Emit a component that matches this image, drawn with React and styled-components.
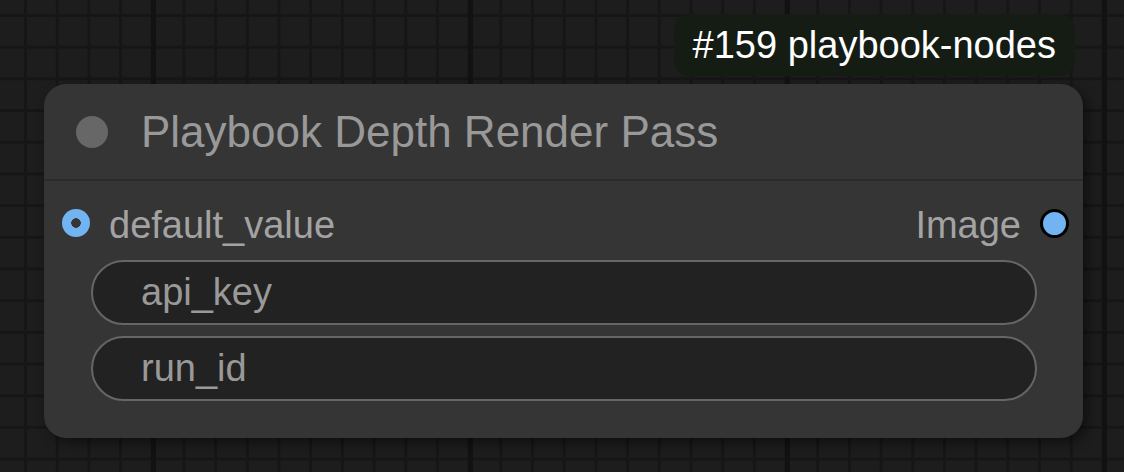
import styled, { createGlobalStyle } from 'styled-components';

const GlobalStyle = createGlobalStyle`
    html, body {
        margin: 0;
        padding: 0;
        background: #1d1d1d;
    }
    body {
        font-family: "Liberation Sans", Arial, sans-serif;
    }
`

// canvas grid: thin lines every ~31.7px, heavier line every 10 cells
const Canvas = styled.div`
    box-sizing: border-box;
    width: 1124px;
    height: 472px;
    overflow: hidden;
    padding: 14px 0 0 44px;
    background-color: #1d1d1d;
    background-image:
        linear-gradient(to right, #121212 5px, transparent 5px),
        linear-gradient(to right, #161616 3px, transparent 3px),
        linear-gradient(to bottom, #161616 3px, transparent 3px);
    background-size: 317px 100%, 31.7px 31.7px, 31.7px 31.7px;
    background-position: 151px 0, 24px 0, 0 14px;
`

const Stack = styled.div`
    width: 1039px;
    display: flex;
    flex-direction: column;
`

const Badge = styled.div`
    align-self: flex-end;
    margin-right: 8px;
    height: 62px;
    padding: 0 19px;
    display: flex;
    align-items: center;
    background: #141c14;
    border-radius: 16px;
    color: #fff;
    font-size: 38px;
    white-space: nowrap;
`

const Node = styled.div`
    margin-top: 8px;
    height: 354px;
    display: flex;
    flex-direction: column;
    background: #353535;
    border-radius: 22px;
    box-shadow: 5px 5px 12px rgba(0, 0, 0, 0.45);
`

const TitleBar = styled.div`
    height: 95px;
    display: flex;
    align-items: center;
    gap: 33px;
    padding-left: 32px;
    border-bottom: 2px solid #2b2b2b;
`

const TitleDot = styled.span`
    width: 32px;
    height: 32px;
    border-radius: 50%;
    background: #676767;
`

const Title = styled.span`
    font-size: 44px;
    color: #999;
    white-space: nowrap;
`

const SlotRow = styled.div`
    height: 58px;
    margin-top: 13px;
    padding: 0 14px 0 18px;
    display: flex;
    align-items: center;
    justify-content: space-between;
`

const Slot = styled.div`
    display: flex;
    align-items: center;
    gap: 19px;
`

const SlotDot = styled.span`
    box-sizing: border-box;
    width: ${p => (p.$output ? '29px' : '28px')};
    height: ${p => (p.$output ? '29px' : '28px')};
    border-radius: 50%;
    background: ${p => (p.$output
        ? '#72b3f1'
        : 'radial-gradient(circle, #353535 0 4.5px, #72b3f1 5px)')};
    border: ${p => (p.$output ? '3px solid #000' : 'none')};
`

const SlotLabel = styled.span`
    font-size: 38px;
    color: #a3a3a3;
    margin-top: 5px;
`

const Widgets = styled.div`
    margin: 8px 46px 0 47px;
    display: flex;
    flex-direction: column;
    gap: 11px;
`

const Widget = styled.div`
    box-sizing: border-box;
    height: 65px;
    padding-left: 48px;
    display: flex;
    align-items: center;
    background: #222;
    border: 2px solid #666;
    border-radius: 33px;
    font-size: 38px;
    color: #999;
`

export default function App() {
    return (
        <>
            <GlobalStyle />
            <Canvas>
                <Stack>
                    <Badge>#159 playbook-nodes</Badge>
                    <Node>
                        <TitleBar>
                            <TitleDot />
                            <Title>Playbook Depth Render Pass</Title>
                        </TitleBar>
                        <SlotRow>
                            <Slot>
                                <SlotDot />
                                <SlotLabel>default_value</SlotLabel>
                            </Slot>
                            <Slot>
                                <SlotLabel>Image</SlotLabel>
                                <SlotDot $output />
                            </Slot>
                        </SlotRow>
                        <Widgets>
                            <Widget>api_key</Widget>
                            <Widget>run_id</Widget>
                        </Widgets>
                    </Node>
                </Stack>
            </Canvas>
        </>
    )
}
